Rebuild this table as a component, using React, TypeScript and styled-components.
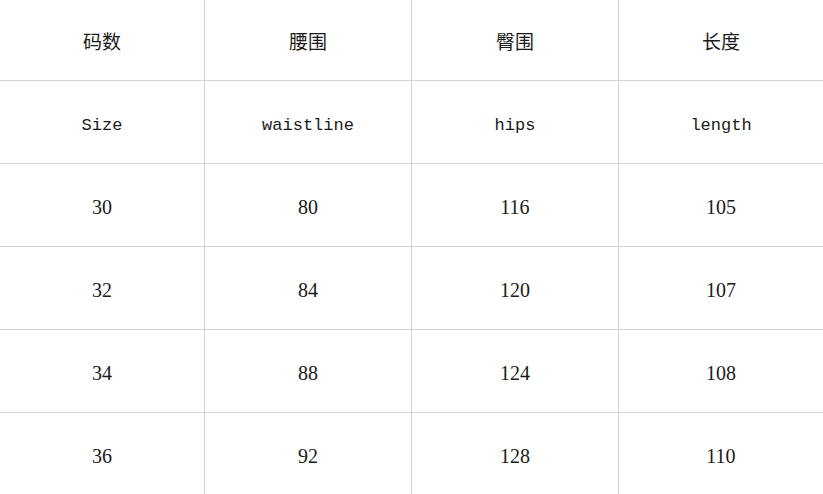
import styled, { createGlobalStyle } from 'styled-components';

const GlobalStyle = createGlobalStyle`
    html, body {
        margin: 0;
        padding: 0;
        background: #ffffff;
        overflow: hidden;
    }
`;

type Kind = 'cjk' | 'word' | 'num';

const rows: { kind: Kind; cells: string[] }[] = [
    { kind: 'cjk', cells: ['码数', '腰围', '臀围', '长度'] },
    { kind: 'word', cells: ['Size', 'waistline', 'hips', 'length'] },
    { kind: 'num', cells: ['30', '80', '116', '105'] },
    { kind: 'num', cells: ['32', '84', '120', '107'] },
    { kind: 'num', cells: ['34', '88', '124', '108'] },
    { kind: 'num', cells: ['36', '92', '128', '110'] },
];

export default function App() {
    return (
        <>
            <GlobalStyle />
            <SizeGrid>
                {rows.map((row, r) =>
                    row.cells.map((text, c) => (
                        <Cell key={`${r}-${c}`}>
                            <Label kind={row.kind}>{text}</Label>
                        </Cell>
                    ))
                )}
            </SizeGrid>
        </>
    );
}

const SizeGrid = styled.div`
    display: grid;
    grid-template-columns: 204px 206px 206px 204px;
    grid-template-rows: 80px 82px 82px 82px 82px 81px;
    gap: 1px;
    width: 823px;
    height: 494px;
    background: #d4d4d4;
`;

const Cell = styled.div`
    background: #ffffff;
    display: flex;
    align-items: center;
    justify-content: center;
`;

const fonts: Record<Kind, string> = {
    cjk: '"Noto Sans CJK SC", sans-serif',
    word: '"Liberation Mono", monospace',
    num: '"Liberation Serif", serif',
};

const sizes: Record<Kind, string> = {
    cjk: '19px',
    word: '17px',
    num: '20px',
};

const offsets: Record<Kind, string> = {
    cjk: '0px',
    word: '7px',
    num: '4px',
};

const Label = styled.span<{ kind: Kind }>`
    font-family: ${(p) => fonts[p.kind]};
    font-size: ${(p) => sizes[p.kind]};
    color: #1a1a1a;
    line-height: 1;
    margin-top: ${(p) => offsets[p.kind]};
`;
